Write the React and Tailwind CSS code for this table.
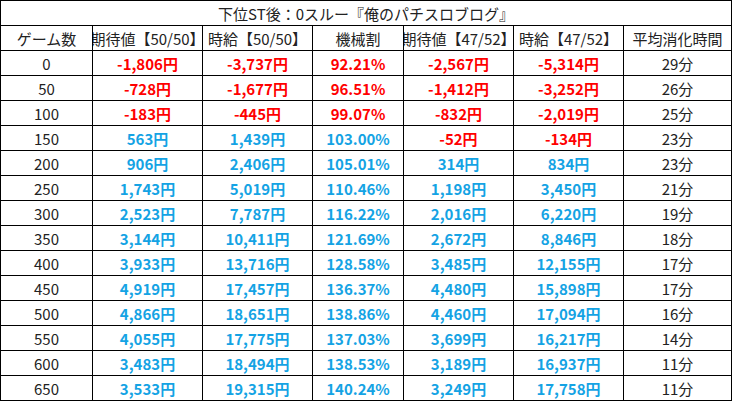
import React from "react";

const rows = [
  ["0", "-1,806円", "-3,737円", "92.21%", "-2,567円", "-5,314円", "29分"],
  ["50", "-728円", "-1,677円", "96.51%", "-1,412円", "-3,252円", "26分"],
  ["100", "-183円", "-445円", "99.07%", "-832円", "-2,019円", "25分"],
  ["150", "563円", "1,439円", "103.00%", "-52円", "-134円", "23分"],
  ["200", "906円", "2,406円", "105.01%", "314円", "834円", "23分"],
  ["250", "1,743円", "5,019円", "110.46%", "1,198円", "3,450円", "21分"],
  ["300", "2,523円", "7,787円", "116.22%", "2,016円", "6,220円", "19分"],
  ["350", "3,144円", "10,411円", "121.69%", "2,672円", "8,846円", "18分"],
  ["400", "3,933円", "13,716円", "128.58%", "3,485円", "12,155円", "17分"],
  ["450", "4,919円", "17,457円", "136.37%", "4,480円", "15,898円", "17分"],
  ["500", "4,866円", "18,651円", "138.86%", "4,460円", "17,094円", "16分"],
  ["550", "4,055円", "17,775円", "137.03%", "3,699円", "16,217円", "14分"],
  ["600", "3,483円", "18,494円", "138.53%", "3,189円", "16,937円", "11分"],
  ["650", "3,533円", "19,315円", "140.24%", "3,249円", "17,758円", "11分"],
];

const headers = ["ゲーム数", "期待値【50/50】", "時給【50/50】", "機械割", "期待値【47/52】", "時給【47/52】", "平均消化時間"];

function isRed(v, i) {
  if (i === 3) return parseFloat(v) < 100;
  return v.startsWith("-");
}

export default function App() {
  return (
    <div
      className="w-[732px] h-[401px] bg-black grid grid-cols-[91px_109px_109px_90px_109px_109px_107px] auto-rows-[24px] gap-px p-px text-[15px] leading-none"
      style={{ fontFamily: '"Noto Sans CJK JP", "Noto Sans", sans-serif' }}
    >
      <div className="col-span-7 bg-white flex items-center justify-center text-[#222]">
        下位ST後：0スルー『俺のパチスロブログ』
      </div>
      {headers.map((h, i) => (
        <div key={i} className="bg-white flex items-center justify-center overflow-hidden whitespace-nowrap text-[#222]">
          {h}
        </div>
      ))}
      {rows.map((r, ri) =>
        r.map((v, i) => {
          if (i === 0 || i === 6) {
            return (
              <div key={ri + "-" + i} className="bg-white flex items-center justify-center text-[#222]">
                {v}
              </div>
            );
          }
          const red = isRed(v, i);
          return (
            <div
              key={ri + "-" + i}
              className={
                red
                  ? "bg-white flex items-center justify-center font-bold text-[#ff0000]"
                  : "bg-white flex items-center justify-center font-bold text-[#14a3e4]"
              }
            >
              {v}
            </div>
          );
        })
      )}
    </div>
  );
}
